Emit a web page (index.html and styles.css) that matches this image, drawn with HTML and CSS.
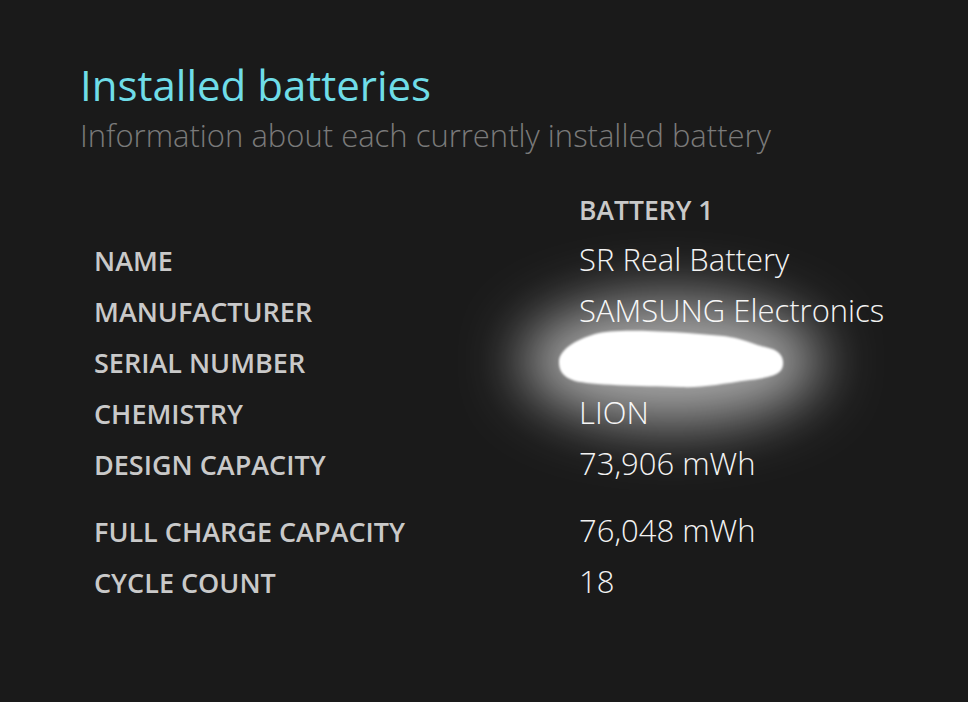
FILE: index.html
```html
<!DOCTYPE html>
<html>
<head>
<meta charset="utf-8">
<link rel="stylesheet" href="styles.css">
</head>
<body>
<div class="page">
  <h1 class="title">Installed batteries</h1>
  <p class="subtitle">Information about each currently installed battery</p>
  <div class="table">
    <div class="label"></div><div class="head">BATTERY 1</div>
    <div class="label">NAME</div><div class="value">SR Real Battery</div>
    <div class="label">MANUFACTURER</div><div class="value">SAMSUNG Electronics</div>
    <div class="label">SERIAL NUMBER</div><div class="value">&nbsp;</div>
    <div class="label">CHEMISTRY</div><div class="value">LION</div>
    <div class="label">DESIGN CAPACITY</div><div class="value">73,906 mWh</div>
    <div class="label">FULL CHARGE CAPACITY</div><div class="value">76,048 mWh</div>
    <div class="label">CYCLE COUNT</div><div class="value">18</div>
    <svg class="redact" width="440" height="260" viewBox="0 0 440 260" aria-hidden="true">
      <defs>
        <filter id="glow" x="-50%" y="-100%" width="200%" height="300%">
          <feGaussianBlur stdDeviation="30"/>
        </filter>
        <filter id="soft" x="-10%" y="-20%" width="120%" height="140%">
          <feGaussianBlur stdDeviation="0.8"/>
        </filter>
      </defs>
      <g transform="translate(40,40)">
        <ellipse filter="url(#glow)" cx="181" cy="91" rx="150" ry="62" fill="#ffffff" fill-opacity="0.62"/>
        <path filter="url(#soft)" fill="#ffffff" d="M69,92 C69,80 85,70 105,64 C125,58 180,61 233,66 C255,69 262,74 275,77 C290,80 294,87 293,95 C292,103 285,107 260,110 C230,114 213,118 190,117 C150,116 100,115 85,111 C72,107 69,100 69,92 Z"/>
      </g>
    </svg>
  </div>
</div>
</body>
</html>
```
FILE: styles.css
```css
html, body {
  margin: 0;
  padding: 0;
  background: #1a1a1a;
  height: 100%;
}
.page {
  padding: 61px 0 0 80px;
  font-family: "Open Sans", "Noto Sans", sans-serif;
}
.title {
  margin: 0;
  font-size: 42px;
  font-weight: 400;
  color: #6fdde8;
  line-height: 48px;
}
.subtitle {
  margin: 2px 0 0;
  font-size: 31px;
  font-weight: 300;
  color: #7a7a7a;
  line-height: 48px;
}
.table {
  position: relative;
  margin: 31px 0 0 14px;
  display: grid;
  grid-template-columns: 485px auto;
  grid-template-rows: 49px 51px 51px 51px 51px 67px 51px 51px;
  align-items: baseline;
}
.label {
  font-size: 27px;
  font-weight: 600;
  color: #c9c9c9;
  line-height: 40px;
}
.head {
  font-size: 26.5px;
  font-weight: 600;
  color: #c9c9c9;
  line-height: 40px;
}
.value {
  font-size: 31px;
  font-weight: 300;
  color: #f2f2f2;
  line-height: 40px;
}
.redact {
  position: absolute;
  left: 356px;
  top: 40px;
}
```
